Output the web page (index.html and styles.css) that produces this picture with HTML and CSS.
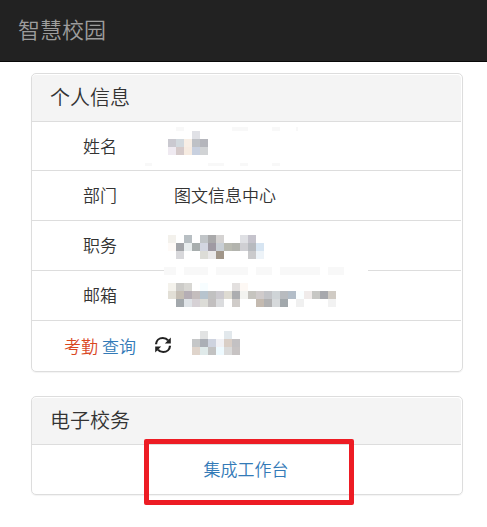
FILE: index.html
```
<!DOCTYPE html>
<html lang="zh-CN">
<head>
<meta charset="utf-8">
<meta name="viewport" content="width=device-width, initial-scale=1">
<title>智慧校园</title>
<link rel="stylesheet" href="styles.css">
</head>
<body>
<nav class="navbar">
  <a class="navbar-brand" href="#">智慧校园</a>
</nav>

<main class="container">
  <section class="panel">
    <h3 class="panel-heading">个人信息</h3>
    <div class="row">
      <div class="label">姓名</div>
      <div class="value masked">
        <svg class="mosaic" width="40" height="28" viewBox="0 0 40 28">
          <g fill="#f8f8f8">
            <rect x="8" y="-4" width="8" height="4"/><rect x="64" y="-4" width="16" height="4"/><rect x="104" y="-4" width="8" height="4"/><rect x="128" y="-4" width="2" height="4"/>
            <rect x="-23" y="32" width="7" height="3"/><rect x="40" y="32" width="16" height="3"/><rect x="72" y="32" width="8" height="3"/><rect x="104" y="32" width="8" height="3"/>
          </g>
          <rect x="24" y="0" width="8" height="8" fill="#e0e1e6"/>
          <rect x="0" y="8" width="8" height="8" fill="#cac9d0"/>
          <rect x="8" y="8" width="8" height="8" fill="#d2d9de"/>
          <rect x="16" y="8" width="8" height="8" fill="#f7eee5"/>
          <rect x="24" y="8" width="8" height="8" fill="#bec1c6"/>
          <rect x="32" y="8" width="8" height="8" fill="#b5b6bc"/>
          <rect x="0" y="16" width="8" height="8" fill="#efeaf1"/>
          <rect x="8" y="16" width="8" height="8" fill="#d5caca"/>
          <rect x="16" y="16" width="8" height="8" fill="#f6ebe1"/>
          <rect x="24" y="16" width="8" height="8" fill="#c8d0df"/>
          <rect x="32" y="16" width="8" height="8" fill="#d1d3d5"/>
        </svg>
      </div>
    </div>
    <div class="row">
      <div class="label">部门</div>
      <div class="value">图文信息中心</div>
    </div>
    <div class="row">
      <div class="label">职务</div>
      <div class="value masked">
        <svg class="mosaic" width="96" height="19" viewBox="0 0 96 19">
          <rect x="0" y="0" width="8" height="8" fill="#f3f1ec"/>
          <rect x="16" y="0" width="8" height="8" fill="#b8bfc3"/>
          <rect x="32" y="0" width="8" height="8" fill="#c1c5c8"/>
          <rect x="40" y="0" width="8" height="8" fill="#a9a9aa"/>
          <rect x="48" y="0" width="8" height="8" fill="#d5d3d2"/>
          <rect x="72" y="0" width="8" height="8" fill="#dfe0e4"/>
          <rect x="80" y="0" width="8" height="8" fill="#c5c3cc"/>
          <rect x="0" y="8" width="8" height="8" fill="#fefaf7"/>
          <rect x="8" y="8" width="8" height="8" fill="#a3a5a9"/>
          <rect x="16" y="8" width="8" height="8" fill="#e8edee"/>
          <rect x="24" y="8" width="8" height="8" fill="#a8aeae"/>
          <rect x="32" y="8" width="8" height="8" fill="#d3d6e1"/>
          <rect x="40" y="8" width="8" height="8" fill="#9f9aa3"/>
          <rect x="48" y="8" width="8" height="8" fill="#c9cfd5"/>
          <rect x="56" y="8" width="8" height="8" fill="#b9bab1"/>
          <rect x="64" y="8" width="8" height="8" fill="#b3b4ae"/>
          <rect x="72" y="8" width="8" height="8" fill="#cfcfd3"/>
          <rect x="80" y="8" width="8" height="8" fill="#b7babf"/>
          <rect x="88" y="8" width="8" height="8" fill="#d7e5f2"/>
          <rect x="8" y="16" width="8" height="8" fill="#d8d8db"/>
          <rect x="32" y="16" width="8" height="8" fill="#dcdcd7"/>
          <rect x="40" y="16" width="8" height="8" fill="#eae9ea"/>
          <rect x="48" y="16" width="8" height="8" fill="#a19689"/>
          <rect x="80" y="16" width="8" height="8" fill="#cacacc"/>
          <rect x="88" y="16" width="8" height="8" fill="#edf3f8"/>
        </svg>
      </div>
    </div>
    <div class="row">
      <div class="label">邮箱</div>
      <div class="value masked">
        <svg class="mosaic" width="168" height="23" viewBox="0 0 168 23">
          <!-- strip over the row line -->
          <rect x="-4" y="-16" width="204" height="8" fill="#fff"/>
          <g fill="#f8f8f8">
            <rect x="-4" y="-16" width="12" height="8"/><rect x="16" y="-16" width="24" height="8"/><rect x="48" y="-16" width="32" height="8"/>
            <rect x="88" y="-16" width="16" height="8"/><rect x="112" y="-16" width="40" height="8"/><rect x="160" y="-16" width="16" height="8"/>
          </g>
          <rect x="0" y="0" width="8" height="8" fill="#f4f2ec"/>
          <rect x="8" y="0" width="8" height="8" fill="#cccbc8"/>
          <rect x="16" y="0" width="8" height="8" fill="#d8d7d3"/>
          <rect x="32" y="0" width="8" height="8" fill="#f7fdff"/>
          <rect x="64" y="0" width="8" height="8" fill="#e3e0df"/>
          <rect x="72" y="0" width="8" height="8" fill="#fdf8f4"/>
          <rect x="0" y="8" width="8" height="8" fill="#e2dfd6"/>
          <rect x="8" y="8" width="8" height="8" fill="#c5beb4"/>
          <rect x="16" y="8" width="8" height="8" fill="#b5aeb5"/>
          <rect x="24" y="8" width="8" height="8" fill="#c4bdbd"/>
          <rect x="32" y="8" width="8" height="8" fill="#b7c4ce"/>
          <rect x="40" y="8" width="8" height="8" fill="#c1c1c1"/>
          <rect x="48" y="8" width="8" height="8" fill="#cccacf"/>
          <rect x="56" y="8" width="8" height="8" fill="#dedbd2"/>
          <rect x="64" y="8" width="8" height="8" fill="#acadb0"/>
          <rect x="72" y="8" width="8" height="8" fill="#f3f3f0"/>
          <rect x="80" y="8" width="8" height="8" fill="#c6c4bf"/>
          <rect x="88" y="8" width="8" height="8" fill="#d0cbcb"/>
          <rect x="96" y="8" width="8" height="8" fill="#c3c4c8"/>
          <rect x="104" y="8" width="8" height="8" fill="#cfd4d7"/>
          <rect x="112" y="8" width="8" height="8" fill="#b8bbbf"/>
          <rect x="120" y="8" width="8" height="8" fill="#b2bdc8"/>
          <rect x="128" y="8" width="8" height="8" fill="#fafeff"/>
          <rect x="136" y="8" width="8" height="8" fill="#f0ebea"/>
          <rect x="144" y="8" width="8" height="8" fill="#c7c7c4"/>
          <rect x="152" y="8" width="8" height="8" fill="#a7a8ad"/>
          <rect x="160" y="8" width="8" height="8" fill="#d0cbc4"/>
          <rect x="8" y="16" width="8" height="8" fill="#a3a8ac"/>
          <rect x="16" y="16" width="8" height="8" fill="#dfe3e7"/>
          <rect x="24" y="16" width="8" height="8" fill="#d6d1d5"/>
          <rect x="32" y="16" width="8" height="8" fill="#dcdcd7"/>
          <rect x="40" y="16" width="8" height="8" fill="#c2bfbf"/>
          <rect x="48" y="16" width="8" height="8" fill="#dbdcde"/>
          <rect x="64" y="16" width="8" height="8" fill="#d0ccc9"/>
          <rect x="88" y="16" width="8" height="8" fill="#c4bab0"/>
          <rect x="96" y="16" width="8" height="8" fill="#b1b1b2"/>
          <rect x="104" y="16" width="8" height="8" fill="#d6d9db"/>
          <rect x="112" y="16" width="8" height="8" fill="#a2a8ac"/>
          <rect x="128" y="16" width="8" height="8" fill="#f0f0f0"/>
          <rect x="160" y="16" width="8" height="8" fill="#f2f2f2"/>
        </svg>
      </div>
    </div>
    <div class="row">
      <div class="label"><span class="danger">考勤</span> <a class="link" href="#">查询</a></div>
      <button class="refresh" type="button" aria-label="刷新">
        <svg width="18" height="18" viewBox="0 0 18 18">
          <path d="M2 8.300C2.200 4.500 5.200 2 8.800 2c2.200 0 4 .8 5.300 2.400M16 9.700C15.800 13.500 12.800 16 9.200 16c-2.200 0-4-.8-5.300-2.400" fill="none" stroke="#222" stroke-width="2.200"/>
          <path d="M16.800 1.500v6h-6zM1.200 16.500v-6h6z" fill="#222"/>
        </svg>
      </button>
      <div class="status">
        <svg class="mosaic" width="48" height="28" viewBox="0 0 48 28">
          <rect x="8" y="0" width="8" height="8" fill="#e2e3e3"/>
          <rect x="32" y="0" width="8" height="8" fill="#e2e8ec"/>
          <rect x="0" y="8" width="8" height="8" fill="#c5c7c8"/>
          <rect x="8" y="8" width="8" height="8" fill="#abafb6"/>
          <rect x="16" y="8" width="8" height="8" fill="#ced3df"/>
          <rect x="24" y="8" width="8" height="8" fill="#f1f1f5"/>
          <rect x="32" y="8" width="8" height="8" fill="#d9cec6"/>
          <rect x="40" y="8" width="8" height="8" fill="#c3c1c3"/>
          <rect x="0" y="16" width="8" height="8" fill="#dfd4cb"/>
          <rect x="8" y="16" width="8" height="8" fill="#e0eaea"/>
          <rect x="16" y="16" width="8" height="8" fill="#c2c2c2"/>
          <rect x="24" y="16" width="8" height="8" fill="#eefaff"/>
          <rect x="32" y="16" width="8" height="8" fill="#dadada"/>
          <rect x="40" y="16" width="8" height="8" fill="#c7c3c3"/>
        </svg>
      </div>
    </div>
  </section>

  <section class="panel">
    <h3 class="panel-heading">电子校务</h3>
    <div class="row row-center">
      <a class="link" href="#">集成工作台</a>
      <span class="highlight"></span>
    </div>
  </section>
</main>
</body>
</html>
```
FILE: styles.css
```
* {
  box-sizing: border-box;
}

body {
  margin: 0;
  background-color: #fff;
  color: #333;
  font-family: "Noto Sans CJK SC", sans-serif;
  font-size: 17px;
  font-weight: 350;
  line-height: 25px;
}

a {
  text-decoration: none;
}

.navbar {
  padding: 12px 18px 17px;
  background-color: #222;
  border-bottom: 1px solid #080808;
}

.navbar-brand {
  display: block;
  color: #9d9d9d;
  font-size: 22px;
  line-height: 32px;
}

.container {
  padding: 11px 24px 0 31px;
}

.panel {
  margin-bottom: 24px;
  padding: 1px 1px 0 0;
  border: 1px solid #ddd;
  border-radius: 5px;
  box-shadow: 0 1px 1px rgba(0, 0, 0, 0.05);
}

.panel-heading {
  margin: 0;
  padding: 8px 18px 10px;
  background-color: #f4f4f4;
  border-bottom: 1px solid #ddd;
  border-radius: 4px 4px 0 0;
  font-size: 20px;
  font-weight: 350;
  line-height: 28px;
}

.row {
  display: flex;
  align-items: center;
  position: relative;
  min-height: 50px;
  padding: 0 15px 2px 14px;
  border-bottom: 1px solid #ddd;
}

.panel-heading + .row {
  min-height: 49px;
}

.row:last-child {
  border-bottom: none;
}

.row-center {
  justify-content: center;
}

.label {
  flex: 0 0 27%;
  text-align: center;
}

.value {
  padding-left: 20px;
}

.masked {
  padding-left: 14px;
}

.mosaic {
  display: block;
  overflow: visible;
  shape-rendering: crispEdges;
}

.link {
  color: #337ab7;
}

.danger {
  color: #d9471f;
}

.refresh {
  display: flex;
  padding: 0;
  border: none;
  background: none;
  cursor: pointer;
}

.status {
  padding-left: 20px;
}

/* red frame round the workbench link */
.highlight {
  position: absolute;
  top: -6px;
  bottom: -11px;
  left: 26%;
  width: 49%;
  border: 5px solid #ed1c24;
  border-radius: 2px;
  pointer-events: none;
}
```
